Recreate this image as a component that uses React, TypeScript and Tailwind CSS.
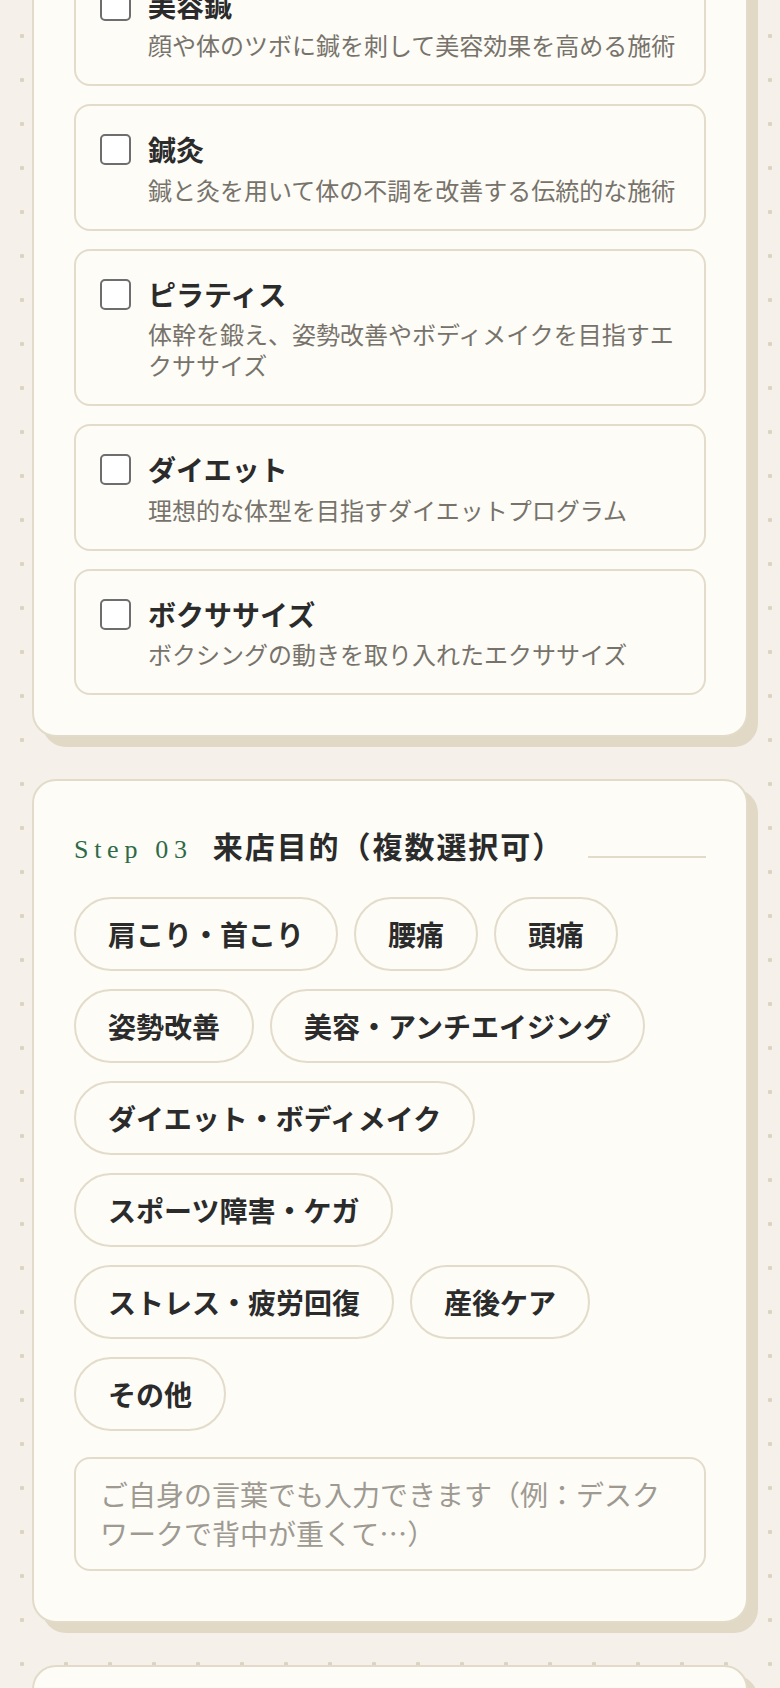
import React from 'react';

const menus = [
  { title: '美容鍼', desc: '顔や体のツボに鍼を刺して美容効果を高める施術' },
  { title: '鍼灸', desc: '鍼と灸を用いて体の不調を改善する伝統的な施術' },
  { title: 'ピラティス', desc: '体幹を鍛え、姿勢改善やボディメイクを目指すエクササイズ' },
  { title: 'ダイエット', desc: '理想的な体型を目指すダイエットプログラム' },
  { title: 'ボクササイズ', desc: 'ボクシングの動きを取り入れたエクササイズ' },
];

const purposes = [
  '肩こり・首こり',
  '腰痛',
  '頭痛',
  '姿勢改善',
  '美容・アンチエイジング',
  'ダイエット・ボディメイク',
  'スポーツ障害・ケガ',
  'ストレス・疲労回復',
  '産後ケア',
  'その他',
];

function Card({ children, className = '' }: { children?: React.ReactNode; className?: string }) {
  return (
    <section className={`rounded-[24px] border-2 border-[#e2dbc9] bg-[#fdfcf7] p-10 shadow-[10px_10px_0_#e1d9c6] ${className}`}>
      {children}
    </section>
  );
}

function MenuOption({ title, desc }: { title: string; desc: string }) {
  return (
    <label className="flex items-start gap-[17px] rounded-[16px] border-2 border-[#e3dccb] bg-[#fdfcf7] p-6">
      <input
        type="checkbox"
        className="mt-[4px] h-[31px] w-[31px] shrink-0 appearance-none rounded-[5px] border-2 border-[#6e6e6e] bg-white"
      />
      <div className="min-w-0">
        <p className="text-[28px] font-bold leading-[1.4] text-[#2b2b2b]">{title}</p>
        <p className="mt-1 text-[24px] leading-[1.3] text-[#77736b]">{desc}</p>
      </div>
    </label>
  );
}

function Pill({ label }: { label: string }) {
  return (
    <button
      type="button"
      className="rounded-full border-2 border-[#e3dccb] bg-[#fdfcf7] px-8 py-[14px] text-[28px] font-bold leading-[1.5] text-[#2b2b2b]"
    >
      {label}
    </button>
  );
}

export default function App() {
  return (
    <div className="h-[1688px] overflow-hidden bg-[#f5f1ea] bg-[radial-gradient(circle,#dcd4c2_2px,transparent_2.5px)] bg-[length:44px_44px] bg-[position:0_14px] font-['Noto_Sans_CJK_JP',sans-serif]">
      <div className="-mt-[82px] flex flex-col gap-[42px] px-8">
        {/* Step 02: menu (partially scrolled out) */}
        <Card>
          <div className="flex flex-col gap-[18px]">
            {menus.map((m) => (
              <MenuOption key={m.title} title={m.title} desc={m.desc} />
            ))}
          </div>
        </Card>

        {/* Step 03: purpose */}
        <Card>
          <div className="mb-[28px] flex items-baseline gap-5">
            <span className="font-['Liberation_Serif',serif] text-[26px] tracking-[0.22em] text-[#2e6a48]">Step 03</span>
            <h2 className="text-[30px] font-bold leading-[48px] tracking-[0.065em] text-[#2b2b2b]">来店目的（複数選択可）</h2>
            <div className="ml-1 h-[2px] flex-1 bg-[#e2dbc9]" />
          </div>
          <div className="flex flex-wrap gap-x-4 gap-y-[18px]">
            {purposes.map((p) => (
              <Pill key={p} label={p} />
            ))}
          </div>
          <textarea
            rows={2}
            placeholder="ご自身の言葉でも入力できます（例：デスクワークで背中が重くて…）"
            className="mt-[26px] mb-[10px] block w-full resize-none rounded-[16px] border-2 border-[#e3dccb] bg-[#fdfcf7] px-6 py-4 text-[28px] leading-[1.4] text-[#2b2b2b] outline-none placeholder:text-[#9e9a92]"
          />
        </Card>

        {/* next step, cut off below */}
        <Card className="h-[300px]" />
      </div>
    </div>
  );
}
